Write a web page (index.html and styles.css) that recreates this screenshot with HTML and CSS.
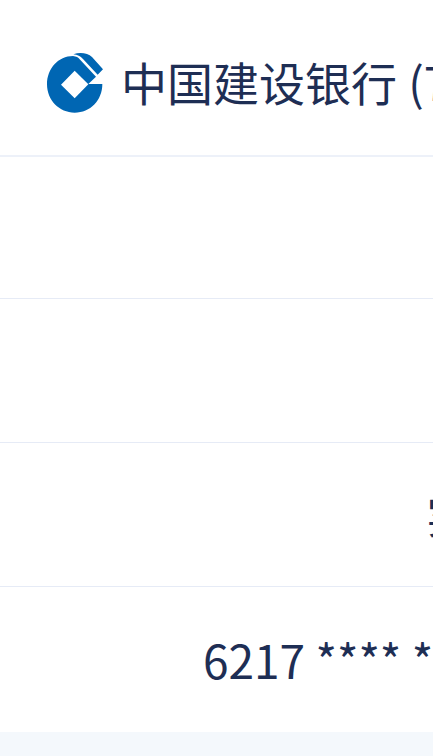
FILE: index.html
```
<!DOCTYPE html>
<html lang="zh-CN">
<head>
  <meta charset="UTF-8" />
  <meta name="viewport" content="width=device-width, initial-scale=1.0"/>
  <title>中国建设银行</title>
  <link rel="stylesheet" href="styles.css">
</head>
<body>

  <!-- Card details -->
  <main class="details">
    <div class="row bank-row">
      <svg class="bank-logo" viewBox="33 36 174 186" aria-hidden="true">
        <path d="M202 132 H160 L183 110 L134 58 C130 52 124 49 114 48 C70 48 36 86 36 133 C36 181 73 218 119 218 C166 218 202 181 202 132 Z M119 92 L160 133 L119 175 L78 134 Z" fill-rule="evenodd"/>
        <path d="M115 43 C136 35 159 40 171 51 L204 88 L188 104 L144 57 C136 48 128 45 115 43 Z"/>
      </svg>
      <span class="bank-name">中国建设银行 (7</span>
    </div>
    <div class="row"></div>
    <div class="row"></div>
    <div class="row type-row">
      <span>实</span>
    </div>
    <div class="row number-row">
      <span>6217 **** *</span>
    </div>
  </main>

</body>
</html>
```

FILE: styles.css
```
/* Global Styles */
* {
  box-sizing: border-box;
}

body {
  font-family: 'Noto Sans CJK SC', sans-serif;
  margin: 0;
  height: 756px;
  overflow: hidden;
  background-color: #f4f8fc;
  color: #1e2e54;
}

/* Card details */
.details {
  background-color: #ffffff;
}

.row {
  display: flex;
  align-items: center;
  height: 144px;
  border-bottom: 1px solid #e6ebf6;
  overflow: hidden;
  font-size: 46px;
  line-height: 68px;
  white-space: nowrap;
}

.row:nth-child(2) {
  height: 142px;
}

.bank-row {
  height: 157px;
  padding: 10px 0 0 46px;
  border-bottom: 2px solid #edf1f9;
}

.bank-logo {
  flex: none;
  width: 58px;
  height: 62px;
  fill: #0066b3;
}

.bank-name {
  margin: 0 0 4px 17px;
  word-spacing: 1px;
}

.type-row {
  padding: 0 0 3px 426px;
}

.number-row {
  height: 145px;
  padding: 0 0 2px 203px;
  border-bottom: none;
}
```
